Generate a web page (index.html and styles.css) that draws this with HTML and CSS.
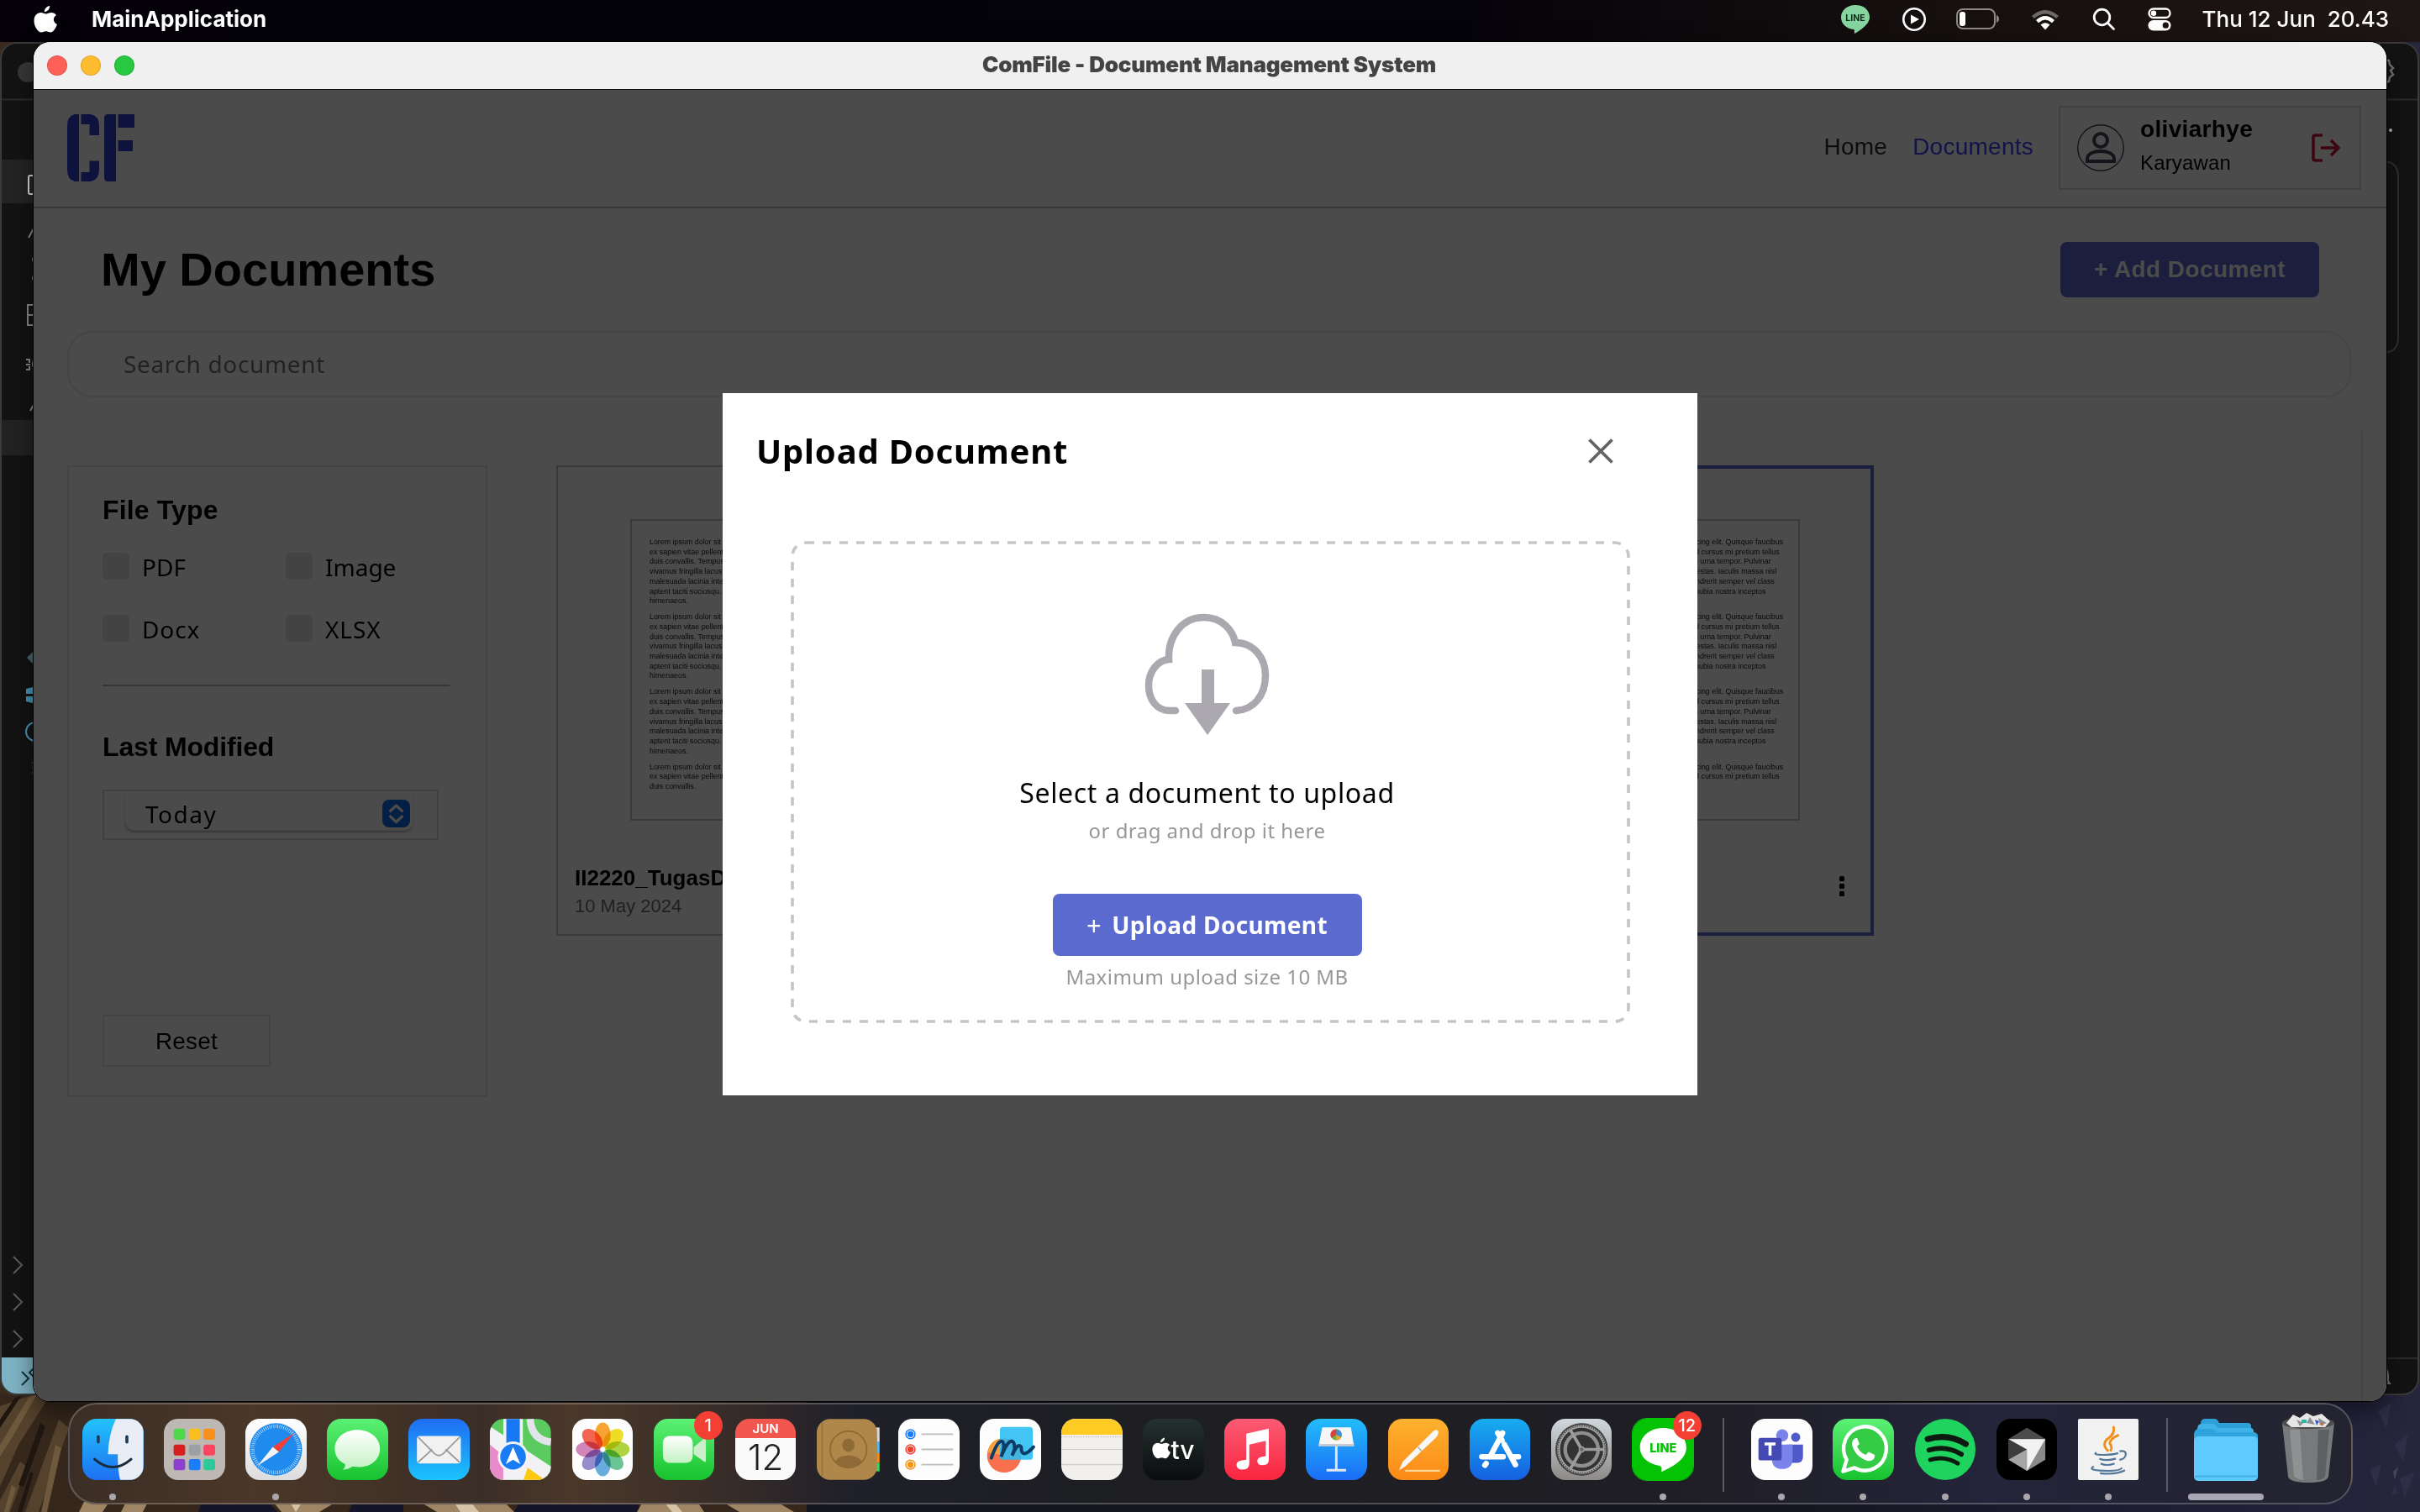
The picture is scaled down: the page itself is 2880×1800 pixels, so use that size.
FILE: index.html
```html
<!DOCTYPE html>
<html lang="en">
<head>
<meta charset="utf-8">
<title>ComFile - Document Management System</title>
<link rel="stylesheet" href="styles.css">
</head>
<body>
<div class="desktop">
  <svg class="wall wall-left" viewBox="0 0 960 140" preserveAspectRatio="none">
    <rect width="960" height="140" fill="#35271b"/>
    <path d="M0 14L40 0L60 0L22 60L0 110ZM70 30L82 40L46 140L30 140ZM0 126L24 80L32 86L12 140L0 140Z" fill="#54422c"/>
    <path d="M34 4L44 0L14 52L0 74V60ZM66 60L73 64L56 140L49 140ZM14 108L19 112L10 140H5Z" fill="#6f593c"/>
    <path d="M18 4L25 2L0 40V30ZM48 34L54 38L28 110L22 108ZM36 92L40 94L26 140H21Z" fill="#1f1610"/>
    <path d="M240 128H320L330 140H236ZM420 128H480V140H415ZM618 128H760V140H612Z" fill="#15152a"/>
    <path d="M100 128L130 128L122 140L94 140ZM150 128L176 128L170 140L144 140ZM325 128L400 128L380 140L335 140ZM500 128L600 128L612 140L520 140ZM765 128L830 128L838 140L758 140ZM860 128L925 128L945 140L880 140Z" fill="#a08565"/>
    <path d="M345 128L360 128L352 140ZM540 128L560 128L570 140L548 140ZM790 128L802 128L812 140L800 140Z" fill="#d5c3a8"/>
  </svg>
  <svg class="wall wall-right" viewBox="0 0 90 140">
    <path d="M40 20L56 10L50 40ZM60 60L76 46L70 80ZM30 90L44 82L38 110ZM66 100L84 92L72 124ZM56 120L60 108L64 118Z" fill="#2e2e46"/>
    <path d="M58 92L64 86L60 102Z" fill="#45455a"/>
  </svg>

  <header class="menubar">
    <svg class="apple" viewBox="0 0 28 32"><path fill="#fff" d="M19.2 0c.2 3.700-3 7-6.300 7.200C12.500 3.800 15.800.4 19.200 0zM27 11c-4.600 2.700-3.900 9 .9 11-1.200 3.600-4 9.500-7.700 9.500-2.200 0-2.900-1.300-5.500-1.300s-3.500 1.300-5.500 1.300C5 31.500.5 24.400.5 17.800.5 11.500 4.400 8 8.500 8c2.600 0 4.200 1.500 6.200 1.500S18.200 8 21.200 8c2.200 0 4.500 1.200 5.800 3z"/></svg>
    <b class="menu-app">MainApplication</b>
    <div class="status">
      <svg width="34" height="34" viewBox="0 0 34 34"><path d="M17 0C7 0 0 6.600 0 14.500S6 28 15 29c1.500.5.500 3 1 5 6-3 18-11 18-19.500S27 0 17 0z" fill="#86d5a0"/><text x="17" y="19" class="line-sm" text-anchor="middle">LINE</text></svg>
      <svg class="s-play" width="30" height="30" viewBox="0 0 30 30"><circle cx="15" cy="15" r="12.700" fill="none" stroke="#fff" stroke-width="2.600"/><path d="M11 9.500L21 15L11 20.500Z" fill="#fff"/></svg>
      <svg class="s-bat" width="52" height="26" viewBox="0 0 52 26"><rect x="1" y="1" width="45" height="23" rx="7" fill="none" stroke="#8d8988" stroke-width="2"/><rect x="4" y="4" width="7" height="17" rx="3" fill="#fff"/><path d="M48 8c4 1.500 4 7.500 0 9z" fill="#8d8988"/></svg>
      <svg class="s-wifi" width="34" height="26" viewBox="0 0 34 26"><path d="M1 9Q17 -5 33 9L30 12Q17 1 4 12Z" fill="#6d6968"/><path d="M6 14Q17 4 28 14L25 17.200Q17 10 9 17.200Z" fill="#fff"/><path d="M11.500 19.500Q17 15 22.500 19.500L17 25.500Z" fill="#fff"/></svg>
      <svg class="s-find" width="28" height="28" viewBox="0 0 28 28" fill="none" stroke="#fff" stroke-width="2.800" stroke-linecap="round"><circle cx="11.500" cy="11.500" r="9.300"/><path d="M18.500 18.500L25.500 25.500"/></svg>
      <svg class="s-cc" width="28" height="28" viewBox="0 0 28 28"><rect x="1.500" y="1.500" width="25" height="10.500" rx="5.200" fill="none" stroke="#fff" stroke-width="2.400"/><circle cx="7" cy="6.700" r="3.200" fill="#fff"/><rect x=".5" y="15" width="27" height="12.500" rx="6.200" fill="#fff"/><circle cx="21.300" cy="21.200" r="3.600" fill="#1c1514"/></svg>
      <span class="clock">Thu 12 Jun&nbsp; 20.43</span>
    </div>
  </header>

  <section class="editor">
    <svg class="strip" viewBox="0 0 60 1610" width="60" height="1610">
      <path d="M0 68.500H60" stroke="#2b2b2b" stroke-width="2"/>
      <rect y="140" width="60" height="52" fill="#242424"/><rect y="450" width="60" height="42" fill="#222"/>
      <circle cx="33" cy="36" r="12" fill="#383838"/>
      <rect x="34" y="159" width="20" height="22" rx="2" fill="none" stroke="#dcdcdc" stroke-width="2"/>
      <g fill="none" stroke="#8a8a8a" stroke-width="2"><path d="M34 233L40 222M43 254q-8 5 0 10M43 276q-8 5 0 10M43 313H33V337H43M33 325H43M42 376q-6 8 0 14M31 378h4v4M31 390h4v-4M31 384h5M36 439L41 430"/></g>
      <path d="M32 733L41 724V742Z" fill="#49656d"/>
      <path d="M31 770L39 768V776H31ZM31 779H39V787L31 785Z" fill="#4a93b5"/>
      <circle cx="42" cy="821" r="11" fill="none" stroke="#4a93b5" stroke-width="2"/>
      <path d="M39 857V875" stroke="#777" stroke-dasharray="2 4"/>
      <g fill="none" stroke="#5d5d5d" stroke-width="2"><path d="M16 1446L26 1456L16 1466M16 1490L26 1500L16 1510M16 1534L26 1544L16 1554"/></g>
      <rect y="1566" width="60" height="44" fill="#80b4c5"/>
      <path d="M26 1583L34 1591L26 1599M43 1576L35 1584L41 1590" fill="none" stroke="#16323a" stroke-width="2"/>
    </svg>
    <svg class="strip" viewBox="0 0 40 1610" width="40" height="1610">
      <path d="M0 68.500H40M0 1567H40" stroke="#2b2b2b" stroke-width="2"/>
      <path d="M1 21l5 1 1 5 4 4-3 3 3 5-4 3-1 5-5 1" fill="none" stroke="#777" stroke-width="2.500"/>
      <circle cx="8" cy="105" r="2" fill="#bbb"/>
      <path d="M0 142Q17 143 17 160V352Q17 369 0 370" fill="none" stroke="#303030" stroke-width="2"/>
      <path d="M0 1578q5 2 5 10v6l2 3H0" fill="none" stroke="#777" stroke-width="2"/>
    </svg>
  </section>

  <section class="window">
    <div class="titlebar">
      <div class="lights"><i class="red"></i><i class="amber"></i><i class="green"></i></div>
      <b>ComFile - Document Management System</b>
    </div>
    <div class="content">
      <div class="topnav">
        <svg class="logo" viewBox="0 0 80 80" fill="#2f40cc"><path d="M14 0V80H9Q0 78 0 66V14Q0 2 9 0ZM16.500 0H28Q38 2 38 14V25H26.500V12H16.500ZM16.500 80H28Q38 78 38 66V55.500H26.500V69H16.500ZM48 0H58V80H48Q44 80 44 75V5Q44 0 48 0ZM60.500 0H80V16H60.500ZM60.500 31H78V44H60.500Z"/></svg>
        <nav><a>Home</a><a class="on">Documents</a></nav>
        <div class="user">
          <svg width="56" height="56" viewBox="0 0 56 56" fill="none" stroke="#4a4458"><circle cx="28" cy="28" r="27.300" stroke-width="1.400"/><circle cx="28" cy="19" r="8" stroke-width="4"/><path d="M12 44V41C12 35 20 32 28 32S44 35 44 41V44Z" stroke-width="4"/></svg>
          <div class="who"><b>oliviarhye</b><span>Karyawan</span></div>
          <svg width="34" height="34" viewBox="0 0 34 34" fill="none" stroke="#d0103c" stroke-width="3.600"><path d="M13 2H4.500Q2 2 2 4.500V29.500Q2 32 4.500 32H13M11 17H31M23 8L32 17L23 26"/></svg>
        </div>
      </div>
      <div class="heading"><h1>My Documents</h1><button class="add">+ Add Document</button></div>
      <div class="search">Search document</div>
      <div class="body">
        <aside class="filters">
          <h2>File Type</h2>
          <div class="checks">
            <label><i></i><span>PDF</span></label><label><i></i><span>Image</span></label>
            <label><i></i><span class="wide">Docx</span></label><label><i></i><span class="wide">XLSX</span></label>
          </div>
          <div class="rule"></div>
          <h2 class="mod">Last Modified</h2>
          <div class="combo"><div class="combo-in"><span>Today</span><svg width="33" height="33" viewBox="0 0 33 33"><rect width="33" height="33" rx="8" fill="#0f6be8"/><path d="M9.500 13.500L16.500 7L23.500 13.500M9.500 20L16.500 26.500L23.500 20" fill="none" stroke="#fff" stroke-width="3.200" stroke-linecap="round" stroke-linejoin="round"/></svg></div></div>
          <button class="reset">Reset</button>
        </aside>
        <div class="cards">
          <article class="card">
            <div class="page">
              <p>Lorem ipsum dolor sit amet, consectetur adipiscing elit. Quisque faucibus<br>ex sapien vitae pellentesque sem placerat. In id cursus mi pretium tellus<br>duis convallis. Tempus leo eu aenean sed diam urna tempor. Pulvinar<br>vivamus fringilla lacus nec metus bibendum egestas. Iaculis massa nisl<br>malesuada lacinia integer nunc posuere. Ut hendrerit semper vel class<br>aptent taciti sociosqu. Ad litora torquent per conubia nostra inceptos<br>himenaeos.</p>
              <p>Lorem ipsum dolor sit amet, consectetur adipiscing elit. Quisque faucibus<br>ex sapien vitae pellentesque sem placerat. In id cursus mi pretium tellus<br>duis convallis. Tempus leo eu aenean sed diam urna tempor. Pulvinar<br>vivamus fringilla lacus nec metus bibendum egestas. Iaculis massa nisl<br>malesuada lacinia integer nunc posuere. Ut hendrerit semper vel class<br>aptent taciti sociosqu. Ad litora torquent per conubia nostra inceptos<br>himenaeos.</p>
              <p>Lorem ipsum dolor sit amet, consectetur adipiscing elit. Quisque faucibus<br>ex sapien vitae pellentesque sem placerat. In id cursus mi pretium tellus<br>duis convallis. Tempus leo eu aenean sed diam urna tempor. Pulvinar<br>vivamus fringilla lacus nec metus bibendum egestas. Iaculis massa nisl<br>malesuada lacinia integer nunc posuere. Ut hendrerit semper vel class<br>aptent taciti sociosqu. Ad litora torquent per conubia nostra inceptos<br>himenaeos.</p>
              <p>Lorem ipsum dolor sit amet, consectetur adipiscing elit. Quisque faucibus<br>ex sapien vitae pellentesque sem placerat. In id cursus mi pretium tellus<br>duis convallis.</p>
            </div>
            <div class="meta"><div><b>II2220_TugasD</b><span>10 May 2024</span></div></div>
          </article>
          <article class="card"></article>
          <article class="card selected">
            <div class="page">
              <p>Lorem ipsum dolor sit amet, consectetur adipiscing elit. Quisque faucibus<br>ex sapien vitae pellentesque sem placerat. In id cursus mi pretium tellus<br>duis convallis. Tempus leo eu aenean sed diam urna tempor. Pulvinar<br>vivamus fringilla lacus nec metus bibendum egestas. Iaculis massa nisl<br>malesuada lacinia integer nunc posuere. Ut hendrerit semper vel class<br>aptent taciti sociosqu. Ad litora torquent per conubia nostra inceptos<br>himenaeos.</p>
              <p>Lorem ipsum dolor sit amet, consectetur adipiscing elit. Quisque faucibus<br>ex sapien vitae pellentesque sem placerat. In id cursus mi pretium tellus<br>duis convallis. Tempus leo eu aenean sed diam urna tempor. Pulvinar<br>vivamus fringilla lacus nec metus bibendum egestas. Iaculis massa nisl<br>malesuada lacinia integer nunc posuere. Ut hendrerit semper vel class<br>aptent taciti sociosqu. Ad litora torquent per conubia nostra inceptos<br>himenaeos.</p>
              <p>Lorem ipsum dolor sit amet, consectetur adipiscing elit. Quisque faucibus<br>ex sapien vitae pellentesque sem placerat. In id cursus mi pretium tellus<br>duis convallis. Tempus leo eu aenean sed diam urna tempor. Pulvinar<br>vivamus fringilla lacus nec metus bibendum egestas. Iaculis massa nisl<br>malesuada lacinia integer nunc posuere. Ut hendrerit semper vel class<br>aptent taciti sociosqu. Ad litora torquent per conubia nostra inceptos<br>himenaeos.</p>
              <p>Lorem ipsum dolor sit amet, consectetur adipiscing elit. Quisque faucibus<br>ex sapien vitae pellentesque sem placerat. In id cursus mi pretium tellus<br>duis convallis.</p>
            </div>
            <div class="meta"><svg width="8" height="26" viewBox="0 0 8 26"><rect x="1" y="1" width="6" height="6" rx="1.500"/><rect x="1" y="10" width="6" height="6" rx="1.500"/><rect x="1" y="19" width="6" height="6" rx="1.500"/></svg></div>
          </article>
        </div>
      </div>

      <div class="backdrop">
        <div class="dialog">
          <div class="dialog-head"><h2>Upload Document</h2>
            <svg width="32" height="32" viewBox="0 0 32 32" stroke="#636363" stroke-width="3.800"><path d="M2.500 2.500L29.500 29.500M29.500 2.500L2.500 29.500"/></svg></div>
          <div class="drop">
            <svg class="dash" width="999" height="574"><rect x="2" y="2" width="995" height="570" rx="16" fill="none" stroke="#c6c6c6" stroke-width="3.600" stroke-dasharray="10 10"/></svg>
            <svg class="cloud" width="150" height="150" viewBox="0 0 150 150"><path d="M37 118H30C14 118 5 104 5 88C5 71 16 58 29 57C28 30 44 7 71 7C92 7 105 22 108 37C130 37 144 55 144 76C144 100 130 117 109 118" fill="none" stroke="#aba8b0" stroke-width="8.500" stroke-linecap="round" stroke-linejoin="miter"/><path d="M68 69H83V109H102L75 147L48 109H68Z" fill="#aba8b0"/></svg>
            <p class="lead">Select a document to upload</p>
            <p class="hint">or drag and drop it here</p>
            <button class="upload"><span class="plus">+</span><span>Upload Document</span></button>
            <p class="hint size">Maximum upload size 10 MB</p>
          </div>
        </div>
      </div>
    </div>
  </section>

  <footer class="dock">
    <span class="app finder run"><svg viewBox="0 0 100 100"><path d="M55 0H100V100H62Q58 85 58 58H42Q43 25 55 0Z" fill="#e9edf5"/><path d="M26 29V38M73 29V38" stroke="#1f3a52" stroke-width="5" stroke-linecap="round"/><path d="M20 66Q50 92 80 66" fill="none" stroke="#1b2c3d" stroke-width="4" stroke-linecap="round"/></svg></span>
    <span class="app pad"><svg viewBox="0 0 100 100"><rect x="16" y="16" width="19" height="18" rx="4" fill="#4fd84a"/><rect x="41" y="16" width="19" height="18" rx="4" fill="#fdbf1e"/><rect x="65" y="16" width="19" height="18" rx="4" fill="#f8901c"/><rect x="16" y="42" width="19" height="18" rx="4" fill="#d91e1e"/><rect x="41" y="42" width="19" height="18" rx="4" fill="#9aa0a4"/><rect x="65" y="42" width="19" height="18" rx="4" fill="#fb4460"/><rect x="16" y="66" width="19" height="18" rx="4" fill="#8d3fd0"/><rect x="41" y="66" width="19" height="18" rx="4" fill="#1a7dfa"/><rect x="65" y="66" width="19" height="18" rx="4" fill="#2ec99a"/></svg></span>
    <span class="app safari run"><svg viewBox="0 0 100 100"><circle cx="50" cy="50" r="43" fill="#1f8bee"/><circle cx="50" cy="50" r="38" fill="none" stroke="#cfe6ff" stroke-width="6" stroke-dasharray="1 2.300"/><path d="M80 23L55 54L45 46Z" fill="#f0403c"/><path d="M20 77L45 46L55 54Z" fill="#f3f3f3"/></svg></span>
    <span class="app green-app"><svg viewBox="0 0 100 100"><defs><linearGradient id="bubble" x2="0" y2="1"><stop stop-color="#fff"/><stop offset="1" stop-color="#c4f2c4"/></linearGradient></defs><path d="M50 18C29 18 13 31 13 49C13 60 19 69 30 74Q31 79 26 83Q36 83 42 78C68 83 87 69 87 49C87 31 71 18 50 18Z" fill="url(#bubble)"/></svg></span>
    <span class="app mail"><svg viewBox="0 0 100 100"><rect x="14" y="28" width="72" height="45" rx="5" fill="#f1f1f1"/><path d="M16 30L43 57Q50 63 57 57L84 30M16 71L39 50M84 71L61 50" fill="none" stroke="#9c9c9c" stroke-width="2.500"/></svg></span>
    <span class="app maps"><svg viewBox="0 0 100 100"><rect width="100" height="100" fill="#5bcb5f"/><path d="M0 12L100 78V100H0Z" fill="#f2f2f5"/><path d="M0 42L22 60V100H0Z" fill="#e88bc8"/><path d="M55 100L62 80L90 100Z" fill="#fdc80e"/><path d="M22 0H54V60H22Z" fill="#f2f2f5"/><path d="M27 0H49V60H27Z" fill="#1877f2"/><path d="M66 0Q68 34 100 38" fill="none" stroke="#e3e3ea" stroke-width="12"/><circle cx="38" cy="62" r="25" fill="#f2f4fa"/><circle cx="38" cy="62" r="21" fill="#1a7cf5"/><path d="M38 46L50 74L38 67L26 74Z" fill="#fff"/></svg></span>
    <span class="app white"><svg viewBox="0 0 100 100"><g class="petals"><ellipse cx="50" cy="26" rx="13" ry="20" fill="#f99b1c"/><ellipse cx="50" cy="26" rx="13" ry="20" fill="#efdc10" transform="rotate(45 50 50)"/><ellipse cx="50" cy="26" rx="13" ry="20" fill="#a9d12e" transform="rotate(90 50 50)"/><ellipse cx="50" cy="26" rx="13" ry="20" fill="#5cc08a" transform="rotate(135 50 50)"/><ellipse cx="50" cy="26" rx="13" ry="20" fill="#5aa5dd" transform="rotate(180 50 50)"/><ellipse cx="50" cy="26" rx="13" ry="20" fill="#8d7fcb" transform="rotate(225 50 50)"/><ellipse cx="50" cy="26" rx="13" ry="20" fill="#cf79b4" transform="rotate(270 50 50)"/><ellipse cx="50" cy="26" rx="13" ry="20" fill="#f4553f" transform="rotate(315 50 50)"/></g></svg></span>
    <span class="app green-app"><svg viewBox="0 0 100 100"><rect x="15" y="28" width="49" height="44" rx="11" fill="url(#bubble)"/><path d="M67 47L84 33V69L67 57Z" fill="#cdeecd" stroke="#cdeecd" stroke-width="3" stroke-linejoin="round"/></svg><em class="badge">1</em></span>
    <span class="app cal"><small>JUN</small><strong>12</strong></span>
    <span class="app contacts"><svg viewBox="0 0 100 100"><path d="M97 14H103V38H97Z" fill="#d8d8d8"/><path d="M97 38H103V56H97Z" fill="#55b7ea"/><path d="M97 56H103V72H97Z" fill="#f78b12"/><path d="M97 72H103V86H97Z" fill="#3fd060"/><rect width="99" height="100" rx="22" fill="#b0874a"/><path d="M9 6V94" stroke="#97713a" stroke-width="2"/><circle cx="52" cy="50" r="30" fill="none" stroke="#8e6a36" stroke-width="2.500"/><ellipse cx="52" cy="43" rx="10" ry="11" fill="#8e6a36"/><path d="M30 70Q36 60 52 60T74 70Q66 80 52 80T30 70Z" fill="#8e6a36"/></svg></span>
    <span class="app white"><svg viewBox="0 0 100 100"><g fill="none" stroke-width="2"><circle cx="20" cy="25" r="7.500" stroke="#1a7af8"/><circle cx="20" cy="50" r="7.500" stroke="#f0402f"/><circle cx="20" cy="75" r="7.500" stroke="#f0951a"/></g><circle cx="20" cy="25" r="5" fill="#1a7af8"/><circle cx="20" cy="50" r="5" fill="#f0402f"/><circle cx="20" cy="75" r="5" fill="#f0951a"/><path d="M38 25H90M38 50H90M38 75H90" stroke="#bdbdbd" stroke-width="2.500"/></svg></span>
    <span class="app white"><svg viewBox="0 0 100 100"><circle cx="40" cy="60" r="28" fill="#f9704f"/><path d="M13 55Q16 34 36 32L40 60Z" fill="#f9a03a"/><rect x="33" y="13" width="54" height="54" rx="5" fill="#28bdf2" opacity=".88"/><path d="M19 64Q31 30 38 38Q42 44 35 62Q48 30 55 38Q60 46 53 60Q62 38 68 46Q68 68 88 46" fill="none" stroke="#0d3c66" stroke-width="5.500" stroke-linecap="round"/></svg></span>
    <span class="app notes"><svg viewBox="0 0 100 100"><rect width="100" height="26" fill="#fecb24"/><path d="M0 29.500H100" stroke="#c4c2bd" stroke-width="2" stroke-dasharray="2 2"/><path d="M0 50H100M0 75H100" stroke="#cfcdc9" stroke-width="1.500"/></svg></span>
    <span class="app tv"><svg viewBox="0 0 28 32"><path fill="#fff" d="M19.200 0c.2 3.700-3 7-6.300 7.200C12.500 3.800 15.800.4 19.200 0zM27 11c-4.600 2.700-3.900 9 .9 11-1.200 3.600-4 9.500-7.700 9.500-2.200 0-2.900-1.300-5.500-1.300s-3.500 1.300-5.500 1.300C5 31.500.5 24.400.5 17.800.5 11.500 4.400 8 8.500 8c2.600 0 4.200 1.500 6.200 1.500S18.200 8 21.200 8c2.200 0 4.500 1.200 5.800 3z"/></svg>tv</span>
    <span class="app music"><svg viewBox="0 0 100 100"><path d="M36 24L73 16V67Q73 76 63 76Q54 76 54 69Q54 62 68 61V36L41 42V73Q41 83 30 83Q20 83 20 75Q20 68 36 67Z" fill="#fff"/></svg></span>
    <span class="app keynote"><svg viewBox="0 0 100 100"><path d="M27 14H74L79 44H21Z" fill="#f6f6f6"/><path d="M21 41H79V45H21Z" fill="#c6cbd2"/><path d="M48 45H52V82H66V86H34V82H48Z" fill="#e4e9f0"/><circle cx="50" cy="26" r="9" fill="#62b64a"/><path d="M50 26V17A9 9 0 0 1 58 30Z" fill="#3f8ee0"/><path d="M50 26L42 31A9 9 0 0 1 50 17Z" fill="#d8433c"/><path d="M50 26L58 30A9 9 0 0 1 50 35Z" fill="#f1a42c"/></svg></span>
    <span class="app pages"><svg viewBox="0 0 100 100"><path d="M18 84L24 70L74 20Q80 16 82 20Q84 24 78 31L28 78Z" fill="#f7f7f7"/><path d="M49 46L55 53" stroke="#b9b9b9" stroke-width="2.500"/><path d="M28 85H85" stroke="#ffd69a" stroke-width="3"/></svg></span>
    <span class="app store"><svg viewBox="0 0 100 100" stroke="#fff" stroke-width="9" stroke-linecap="round" fill="none"><path d="M46 23L53 35M54 23L34 61M57 42L75 75M20 62H55M71 62H80M27 73L25 76"/></svg></span>
    <span class="app settings"><svg viewBox="0 0 100 100"><circle cx="50" cy="50" r="43" fill="#333"/><circle cx="50" cy="50" r="38" fill="none" stroke="#a3a3a3" stroke-width="5"/><circle cx="50" cy="50" r="40" fill="none" stroke="#555" stroke-width="5" stroke-dasharray="2 2"/><circle cx="50" cy="50" r="27" fill="none" stroke="#8f8f8f" stroke-width="6"/><path d="M50 50H86M50 50L32 19M50 50L32 81" stroke="#9c9c9c" stroke-width="5"/><circle cx="50" cy="50" r="4" fill="#666" stroke="#9c9c9c" stroke-width="2"/></svg></span>
    <span class="app line run"><svg viewBox="0 0 100 100"><path d="M50 15C28 15 12 29 12 47C12 62 24 73 44 77Q49 78 47 87C62 80 88 68 88 47C88 29 72 15 50 15Z" fill="#fff"/><text x="50" y="55" text-anchor="middle" class="line-lg">LINE</text></svg><em class="badge">12</em></span>
    <i class="sep"></i>
    <span class="app white run"><svg viewBox="0 0 100 100"><circle cx="51" cy="27" r="10" fill="#7b83eb"/><circle cx="73" cy="30" r="7.500" fill="#5059c9"/><path d="M58 42H85V62Q85 72 75 72H58Z" fill="#5059c9"/><path d="M34 42H68V65Q68 82 51 82T34 65Z" fill="#7b83eb"/><rect x="12" y="31" width="38" height="37" rx="4" fill="#4449b5"/><path d="M22 41H40M31 41V60" stroke="#fff" stroke-width="5"/></svg></span>
    <span class="app green-app run"><svg viewBox="0 0 100 100"><path d="M17 86L23 67A35 36 0 1 1 36 80Z" fill="#35cc45" stroke="#fff" stroke-width="6" stroke-linejoin="round"/><path d="M36 32Q31 36 32 43Q37 62 58 69Q66 70 69 62V59L59 54L54 59Q45 56 40 45L44 41L40 31Z" fill="#fff"/></svg></span>
    <span class="app spot run"><svg viewBox="0 0 100 100" fill="none" stroke="#0d1a10" stroke-linecap="round"><path d="M21 33Q55 23 83 41" stroke-width="10"/><path d="M23 51Q52 43 76 58" stroke-width="8"/><path d="M25 67Q49 60 70 73" stroke-width="7"/></svg></span>
    <span class="app cursor run"><svg viewBox="0 0 100 100"><path d="M50 15L80 33V67L50 85L20 67V33Z" fill="#8a8a8a"/><path d="M50 15L80 33H20Z" fill="#4c4c4c"/><path d="M20 33L50 50L20 67Z" fill="#3d3d3d"/><path d="M20 67L50 50V85Z" fill="#a5a5a5"/><path d="M20 33H80L50 85V50Z" fill="#f2f2f2"/></svg></span>
    <span class="app java run"><svg viewBox="0 0 100 100" fill="none"><path d="M58 12Q62 24 48 33Q38 42 50 53M67 26Q52 33 52 40Q57 46 53 53" stroke="#f09018" stroke-width="4"/><path d="M30 55Q24 59 40 59T66 56M68 53Q80 51 78 60Q76 66 68 67M35 65Q46 70 62 65M37 73Q47 78 60 73M26 78Q14 84 42 85T72 80M36 89Q62 92 77 84" stroke="#53779a" stroke-width="3"/></svg></span>
    <i class="sep sep-files"></i>
    <span class="folders"><svg viewBox="0 0 76 74"><path d="M8 6Q8 0 13 0H24Q28 0 30 5H64Q68 5 68 9V24H8Z" fill="#2f9fd8"/><path d="M4 13Q4 6 9 6H22Q26 6 28 11H67Q71 11 71 15V30H4Z" fill="#3fb2e8"/><path d="M0 20Q0 12 6 12H20Q25 12 27 16H70Q76 16 76 21V40H0Z" fill="#2fa3dc"/><rect y="21" width="76" height="53" rx="5" fill="#5fcbfd"/><path d="M1 68.500H75" stroke="#3fb0e6" stroke-width="2"/></svg></span>
    <span class="trash"><svg viewBox="0 0 64 83"><path d="M1 12H63L56 76Q54 83 32 83T8 76Z" fill="#77797b"/><path d="M10 20L15 76Q22 80 26 80L22 20Z" fill="#8f9193"/><path d="M44 20L42 80Q50 79 52 76L57 20Z" fill="#5d5f61"/><ellipse cx="32" cy="12" rx="31" ry="7" fill="#4a4c4e"/><path d="M6 12L14 2L22 6L30 0L38 4L48 1L58 10L52 17H12Z" fill="#e6e6e4"/><path d="M18 8L26 12L22 16ZM34 5L40 14L30 12ZM44 6L54 12L46 15Z" fill="#8a8f96"/><path d="M24 8h6v4h-6z" fill="#2db7a0"/><path d="M40 8l5 2-3 5z" fill="#3a58b8"/><path d="M46 12l5 0-2 4z" fill="#c86a40"/></svg></span>
  </footer>
</div>
</body>
</html>
```
FILE: styles.css
```css
* { box-sizing: border-box; }
body { margin: 0; }
h1, h2, p { margin: 0; }
i, em { font-style: normal; }
svg { display: block; flex: none; }
button { border: 0; background: none; padding: 0; }

.desktop {
  position: relative;
  width: 2880px;
  height: 1800px;
  overflow: hidden;
  background: linear-gradient(90deg, #3a2b1e 0, #2c221b 700px, #15151f 960px, #15151f 2100px, #20203a 2700px, #26263c 100%);
  font-family: "Liberation Sans", Arial, sans-serif;
}
.wall { position: absolute; bottom: 0; }
.wall-left { left: 0; width: 960px; height: 140px; }
.wall-right { right: 0; width: 90px; height: 140px; }

/* menu bar */
.menubar {
  position: relative;
  height: 50px;
  display: flex;
  align-items: center;
  padding: 0 37px 4px 40px;
  background: linear-gradient(90deg, #040108 0, #05030a 60%, #140e0e 78%, #1e1614 100%);
  color: #fff;
  font: 500 26px/46px Inter, sans-serif;
}
.apple { width: 28px; height: 32px; }
.menu-app { margin-left: 41px; font-weight: 700; }
.status { margin-left: auto; display: flex; align-items: center; }
.s-play { margin-left: 38px; }
.s-bat { margin-left: 35px; }
.s-wifi { margin-left: 37px; }
.s-find { margin-left: 39px; }
.s-cc { margin-left: 38px; }
.clock { margin-left: 37px; }
.line-sm { font: 700 10.500px Inter, sans-serif; fill: #0c2a16; }

/* editor window behind */
.editor {
  position: absolute;
  left: 0;
  top: 50px;
  width: 2879px;
  height: 1611px;
  border: 2px solid #3a3a3a;
  border-radius: 20px;
  background: #131313;
  overflow: hidden;
  display: flex;
  justify-content: space-between;
}
.strip { margin: -2px 0 0 -2px; }

/* application window */
.window {
  position: absolute;
  left: 40px;
  top: 50px;
  width: 2800px;
  height: 1618px;
  border-radius: 20px;
  overflow: hidden;
  background: #fff;
  box-shadow: 0 0 0 1px #000, 0 10px 30px rgba(0, 0, 0, .5);
  display: flex;
  flex-direction: column;
}
.titlebar {
  height: 57px;
  flex: none;
  background: #f0f0f0;
  border-bottom: 1px solid #111;
  display: grid;
  grid-template-columns: 1fr auto 1fr;
  align-items: center;
  font: 700 26px/54px Inter, sans-serif;
  letter-spacing: -.2px;
  color: #434343;
}
.titlebar b { padding: 0 2px 2px 0; }
.lights { display: flex; gap: 16px; padding-left: 16px; }
.lights i { width: 24px; height: 24px; border-radius: 50%; border: 1px solid rgba(0, 0, 0, .12); }
.red { background: #fe5f57; }
.amber { background: #febc2e; }
.green { background: #28c840; }

.content { position: relative; flex: 1; display: flex; flex-direction: column; }
.topnav {
  height: 141px;
  flex: none;
  border-bottom: 2px solid #bdbdbd;
  display: flex;
  align-items: center;
  padding: 0 30px 1px 40px;
}
.logo { width: 80px; height: 80px; }
nav { margin-left: auto; display: flex; gap: 30px; padding: 0 30px 3px 0; font-size: 28px; line-height: 40px; letter-spacing: .25px; color: #2c2a36; }
.on { color: #3e42f2; }
.user {
  width: 360px;
  height: 100px;
  border: 2px solid #d8d8d8;
  display: flex;
  align-items: center;
  padding: 0 23px 0 20px;
}
.who { display: flex; flex-direction: column; margin: 0 auto 4px 19px; line-height: 40px; }
.who b { font-size: 28px; letter-spacing: .33px; }
.who span { font-size: 24px; letter-spacing: .15px; }

.heading { display: flex; align-items: center; justify-content: space-between; height: 66px; margin: 40px 80px 0; flex: none; }
h1 { font-size: 56px; line-height: 66px; }
.add {
  width: 308px;
  height: 66px;
  border-radius: 8px;
  background: #5b6ad0;
  color: #fff;
  font: 700 28px/66px "Liberation Sans", Arial, sans-serif;
  letter-spacing: .41px;
}
.search {
  height: 79px;
  flex: none;
  margin: 40px 42px 0 40px;
  border: 2px solid #eaeaea;
  border-radius: 30px;
  padding-left: 65px;
  font: 28px/74px "Noto Sans", sans-serif;
  letter-spacing: .65px;
  color: #747474;
}
.body { flex: 1; display: flex; margin: 40px 28px 0 40px; padding-top: 41px; border-right: 2px solid #e6e6e6; }

.filters {
  width: 500px;
  height: 752px;
  flex: none;
  border: 2px solid #e6e6e6;
  padding: 31px 0 0 40px;
}
.filters h2 { font-size: 32px; line-height: 40px; letter-spacing: .15px; }
.checks { display: grid; grid-template-columns: 218px 218px; row-gap: 42px; margin-top: 31px; }
.checks label { display: flex; align-items: center; gap: 15px; height: 32px; font: 28px/34px "Noto Sans", sans-serif; }
.checks span { padding-top: 2px; }
.checks i { width: 32px; height: 32px; border-radius: 5px; background: #e4e4e4; }
.wide { letter-spacing: .9px; }
.rule { width: 413px; height: 2px; margin-top: 51px; background: #b8b8b8; }
.filters .mod { margin-top: 52px; letter-spacing: -.15px; }
.combo { width: 400px; height: 60px; margin-top: 31px; border: 2px solid #dadada; padding: 2px 0 0 24px; }
.combo-in {
  width: 344px;
  height: 45px;
  border-radius: 0 0 12px 12px;
  box-shadow: 0 2px 2px rgba(0, 0, 0, .25), inset 1px -1px 1px rgba(0, 0, 0, .08);
  display: flex;
  align-items: center;
  justify-content: space-between;
  padding: 4px 4px 0 25px;
  font: 28px/40px "Noto Sans", sans-serif;
  letter-spacing: 1.500px;
}
.reset {
  display: block;
  width: 200px;
  height: 62px;
  margin-top: 208px;
  border: 2px solid #e2e2e2;
  font: 28px/59px "Liberation Sans", Arial, sans-serif;
  letter-spacing: .2px;
}

.cards { display: flex; gap: 25px; margin-left: 82px; }
.card { width: 506px; height: 560px; border: 2px solid #c6c6c6; display: flex; flex-direction: column; padding-top: 62px; }
.page {
  width: 330px;
  height: 359px;
  margin: 0 auto;
  border: 2px solid #c4c4c4;
  padding: 20px 0 0 21px;
  font-size: 8.900px;
  line-height: 11.700px;
  color: #1a1a1a;
  white-space: nowrap;
}
.page p { margin-bottom: 7.300px; }
.meta { display: flex; margin-top: 51px; padding-left: 20px; line-height: 34px; }
.meta div { display: flex; flex-direction: column; }
.meta b { font-size: 26px; }
.meta span { font-size: 22px; color: #6c6c6c; }
.selected { border: 4px solid #5b6ad0; padding-top: 60px; }
.selected .meta { justify-content: flex-end; padding: 14px 30px 0 0; }

.backdrop {
  position: absolute;
  inset: 0;
  display: flex;
  align-items: center;
  justify-content: center;
  padding-bottom: 3px;
  background: rgba(0, 0, 0, .705);
}
.dialog { width: 1160px; height: 836px; background: #fff; font-family: "Noto Sans", sans-serif; }
.dialog-head { display: flex; align-items: center; justify-content: space-between; height: 64px; margin-top: 37px; padding: 0 99px 0 40px; }
.dialog-head h2 { font-size: 40px; line-height: 64px; letter-spacing: .8px; }
.drop {
  position: relative;
  width: 999px;
  height: 574px;
  margin: 75px 0 0 81px;
  padding: 84px 8px 0 0;
  display: flex;
  flex-direction: column;
  align-items: center;
}
.dash { position: absolute; inset: 0; }
.lead { margin-top: 42px; font-size: 32px; line-height: 48px; letter-spacing: .64px; }
.hint { margin-top: 4px; font-size: 24px; line-height: 34px; letter-spacing: .46px; color: #979797; }
.upload {
  width: 368px;
  height: 74px;
  margin-top: 58px;
  border-radius: 8px;
  background: #5b6acf;
  color: #fff;
  display: flex;
  align-items: center;
  justify-content: center;
  gap: 12px;
  font: 700 28px/74px "Noto Sans", sans-serif;
  letter-spacing: .35px;
}
.plus { font-weight: 400; font-size: 31px; }
.size { margin-top: 8px; }

/* dock */
.dock {
  position: absolute;
  left: 81px;
  top: 1670px;
  width: 2719px;
  height: 121px;
  border: 2px solid rgba(255, 255, 255, .22);
  border-radius: 34px;
  background: linear-gradient(90deg, #3b2e26 0, #4a3728 8%, #3b2e27 18%, #4a382a 22%, #372c28 29%, #20202a 34%, #1d1e22 45%, #1f1e24 70%, #24243a 84%, #232330 100%);
  display: flex;
  gap: 24.500px;
  padding: 17px 0 0 15px;
}
.app {
  position: relative;
  width: 72.600px;
  height: 73px;
  flex: none;
  border-radius: 17px;
}
.app > svg { width: 100%; height: 100%; border-radius: 17px; }
.run::after {
  content: "";
  position: absolute;
  left: 32px;
  top: 89px;
  width: 8px;
  height: 8px;
  border-radius: 50%;
  background: #aaa6ac;
}
.finder { background: linear-gradient(#22c3fb, #1d70f2); }
.pad { background: #bdb8b4; }
.safari { background: linear-gradient(#fff, #dcdcde); }
.green-app { background: linear-gradient(#5cf175, #17c22e); }
.mail { background: linear-gradient(#1f6df2, #1cc4fd); }
.white { background: #fdfdfd; }
.petals ellipse { mix-blend-mode: multiply; opacity: .9; }
.badge {
  position: absolute;
  left: 48px;
  top: -9px;
  width: 34px;
  height: 34px;
  border-radius: 50%;
  background: #f43f34;
  color: #fff;
  font: 500 20px/34px Inter, sans-serif;
  text-align: center;
}
.cal { background: linear-gradient(#f2574f 31%, #fafafa 31%); display: flex; flex-direction: column; align-items: center; font-family: Inter, sans-serif; }
.cal small { font-size: 15px; font-weight: 600; line-height: 24px; color: #fff; }
.cal strong { font-size: 42px; font-weight: 300; line-height: 44px; color: #222; }
.app.contacts > svg { overflow: visible; border-radius: 0; }
.notes { background: #f1f0ed; }
.tv { background: linear-gradient(#24312f, #0a0d0e); display: flex; align-items: center; justify-content: center; color: #fff; font: 500 30px/72px Inter, sans-serif; }
.app.tv > svg { width: 22px; height: 26px; margin-bottom: 4px; border-radius: 0; }
.music { background: linear-gradient(#fb5b74, #fa2540); }
.keynote { background: linear-gradient(#22bdfb, #1b6df5); }
.pages { background: linear-gradient(#fdb12e, #fb8a17); }
.store { background: linear-gradient(#17adf0, #1560e0); }
.settings { background: linear-gradient(#cfd8dc, #8d8a88); }
.line { background: #04c304; outline: 1px solid #04c304; }
.line-lg { font: 800 20px Inter, sans-serif; fill: #04c304; }
.spot { background: #1ed35e; border-radius: 50%; }
.cursor { background: #000; }
.java { background: #f2f2f3; border-radius: 2px; }
.sep { width: 2px; height: 88px; flex: none; margin: -1px 8px 0 10px; background: #5a5a63; }
.sep-files { margin: -1px 7px 0 8px; }
.folders { position: relative; width: 76px; height: 74px; }
.folders::after { content: ""; position: absolute; left: -7px; top: 89px; width: 90px; height: 8px; border-radius: 4px; background: #a9a7b5; }
.trash { width: 64px; height: 83px; margin: -7px 0 0 3px; }
```
